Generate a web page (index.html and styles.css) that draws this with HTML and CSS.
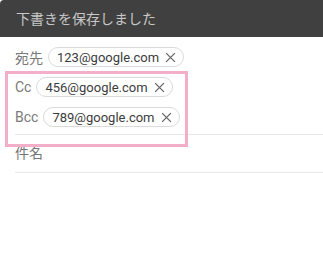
FILE: index.html
```html
<!DOCTYPE html>
<html lang="ja">
<head>
<meta charset="UTF-8" />
<title>下書き</title>
<link rel="stylesheet" href="styles.css">
</head>
<body>
  <div class="compose">
    <header class="bar">下書きを保存しました</header>

    <div class="fields">
      <div class="row">
        <span class="label">宛先</span>
        <span class="chip">123@google.com
          <svg class="x" viewBox="0 0 10 10"><path d="M1 1L9 9M9 1L1 9"/></svg>
        </span>
      </div>
      <div class="row">
        <span class="label">Cc</span>
        <span class="chip">456@google.com
          <svg class="x" viewBox="0 0 10 10"><path d="M1 1L9 9M9 1L1 9"/></svg>
        </span>
      </div>
      <div class="row">
        <span class="label">Bcc</span>
        <span class="chip">789@google.com
          <svg class="x" viewBox="0 0 10 10"><path d="M1 1L9 9M9 1L1 9"/></svg>
        </span>
      </div>
      <div class="line"></div>
      <div class="subject">件名</div>
      <div class="line"></div>

      <!-- ハイライト枠 -->
      <div class="highlight"></div>
    </div>
  </div>
</body>
</html>
```

FILE: styles.css
```css
body {
  margin: 0;
  background: #fff;
  font-family: Roboto, "Noto Sans CJK JP", sans-serif;
}
.compose {
  width: 323px;
  height: 274px;
  overflow: hidden;
}
.bar {
  height: 37px;
  background: #404040;
  color: #c8c8c8;
  font-size: 14px;
  line-height: 37px;
  padding-left: 16px;
  border-top-left-radius: 4px;
  font-family: "Noto Sans CJK JP", sans-serif;
}
.fields {
  position: relative;
  padding: 5px 0 0 15px;
}
.row {
  display: flex;
  align-items: center;
  height: 30px;
  gap: 5px;
}
.label {
  font-size: 14px;
  color: #7a7a7a;
  font-family: Roboto, "Noto Sans CJK JP", sans-serif;
}
.chip {
  display: inline-flex;
  align-items: center;
  height: 18px;
  padding: 0 7px 0 8px;
  border: 1px solid #dadada;
  border-radius: 10px;
  font-size: 13px;
  color: #3c3c3c;
  gap: 6px;
}
.x {
  width: 11px;
  height: 11px;
  stroke: #666;
  stroke-width: 1.2;
  fill: none;
}
.line {
  height: 1px;
  background: #e8e8e8;
  margin-top: 2px;
}
.subject {
  height: 35px;
  line-height: 35px;
  font-size: 14px;
  color: #757575;
  font-family: "Noto Sans CJK JP", sans-serif;
}
.highlight {
  position: absolute;
  left: 5px;
  top: 34px;
  width: 177px;
  height: 70px;
  border: 3px solid #f3afc9;
}
```
